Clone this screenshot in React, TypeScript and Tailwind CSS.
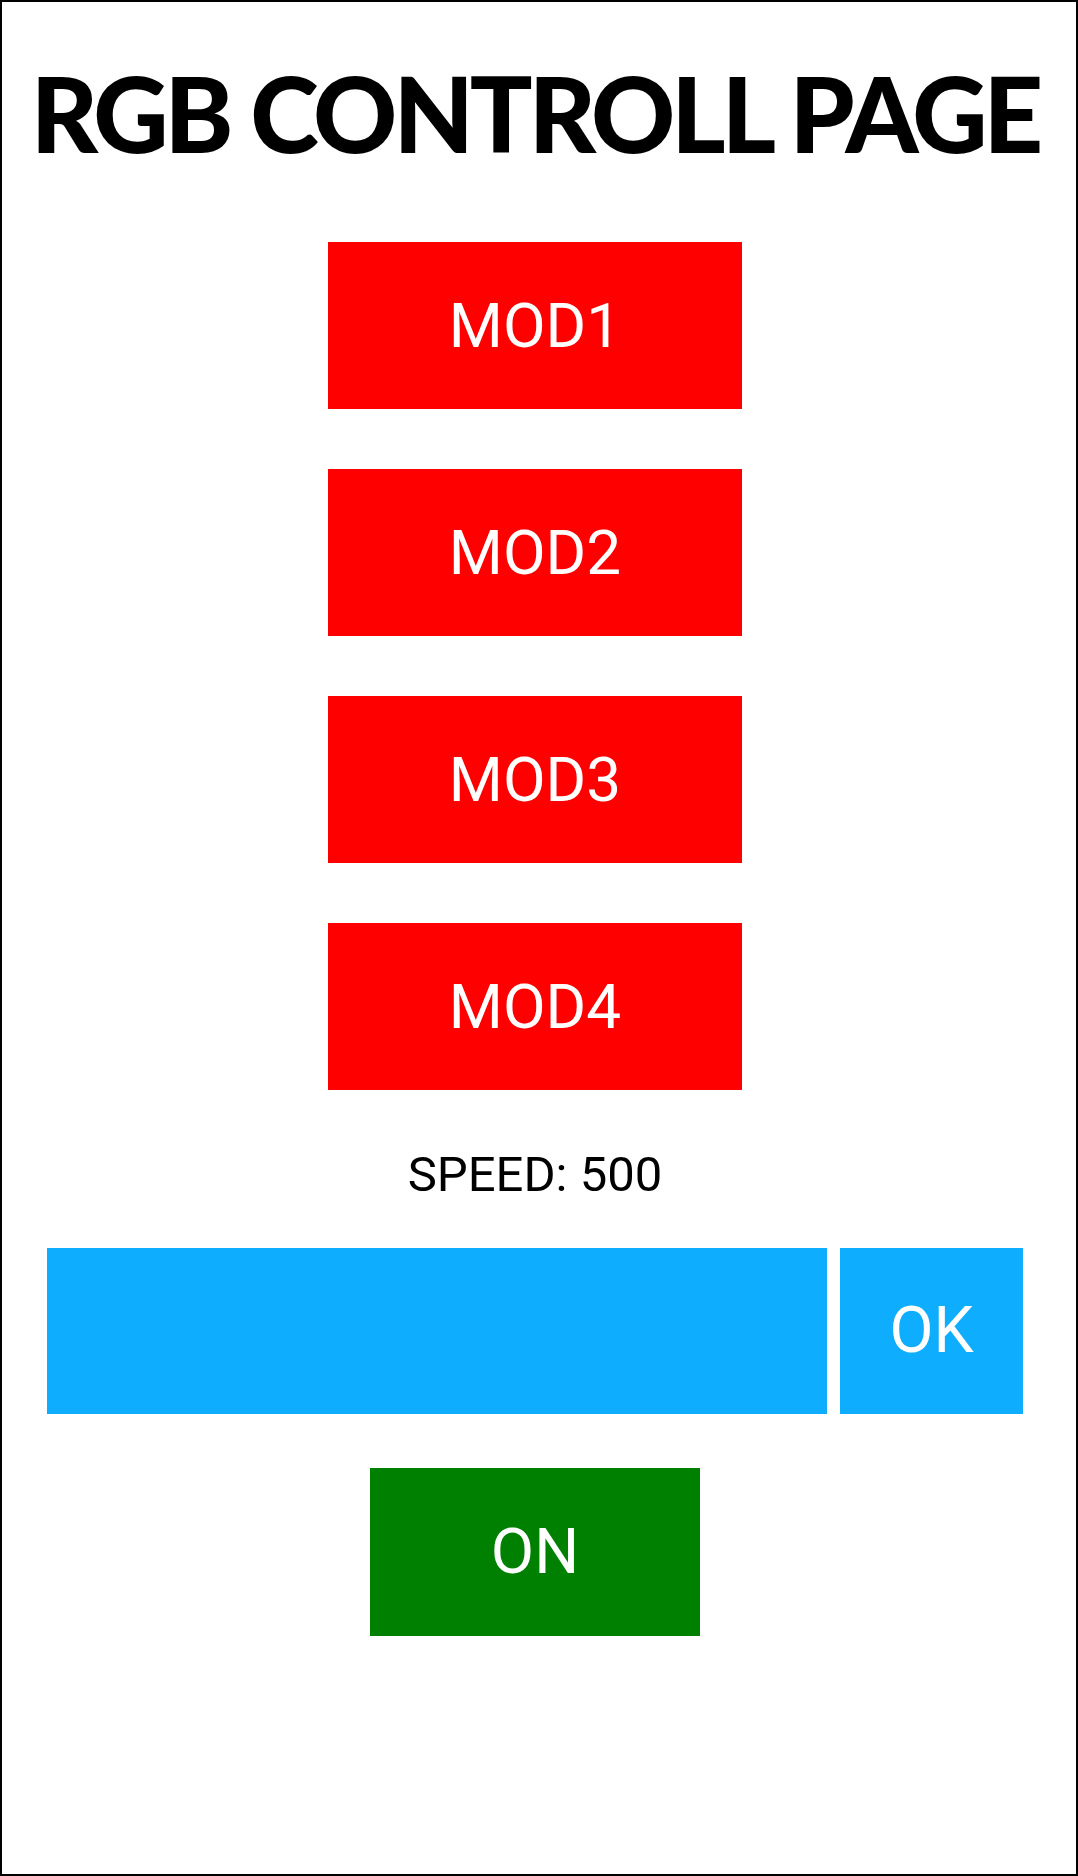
import { useState } from "react"

const mods = ["MOD1", "MOD2", "MOD3", "MOD4"]

export default function App() {
    const [speed, setSpeed] = useState(500)
    const [value, setValue] = useState("")
    const [on, setOn] = useState(true)

    return (
        <div className="w-[1078px] h-[1876px] bg-white border-2 border-black overflow-hidden">
            <div className="w-[1066px] flex flex-col items-center font-['Roboto',sans-serif]">
                {/* タイトル */}
                <h1 className="mt-[59px] text-[104px] leading-none font-black tracking-[-4px] text-black font-['Lato',sans-serif] whitespace-nowrap">
                    RGB CONTROLL PAGE
                </h1>

                {/* モードボタン */}
                <div className="mt-[77px] flex flex-col items-center gap-[60px]">
                    {mods.map((m) => (
                        <button
                            key={m}
                            className="w-[414px] h-[167px] bg-[#ff0000] text-white text-[62px] flex items-center justify-center"
                        >
                            {m}
                        </button>
                    ))}
                </div>

                <p className="mt-[60px] text-[49px] leading-none text-black">SPEED: {speed}</p>

                {/* スピード入力 */}
                <div className="mt-[49px] w-full flex gap-[13px] pl-[45px]">
                    <input
                        value={value}
                        onChange={(e) => setValue(e.target.value)}
                        className="w-[780px] h-[166px] bg-[#0fadfe] outline-none px-6 text-white text-[52px]"
                    />
                    <button
                        onClick={() => value && setSpeed(Number(value))}
                        className="w-[183px] h-[166px] bg-[#0fadfe] text-white text-[64px] flex items-center justify-center"
                    >
                        OK
                    </button>
                </div>

                <button
                    onClick={() => setOn(!on)}
                    className="mt-[54px] w-[330px] h-[168px] bg-[#008000] text-white text-[63px] flex items-center justify-center"
                >
                    {on ? "ON" : "OFF"}
                </button>
            </div>
        </div>
    )
}
